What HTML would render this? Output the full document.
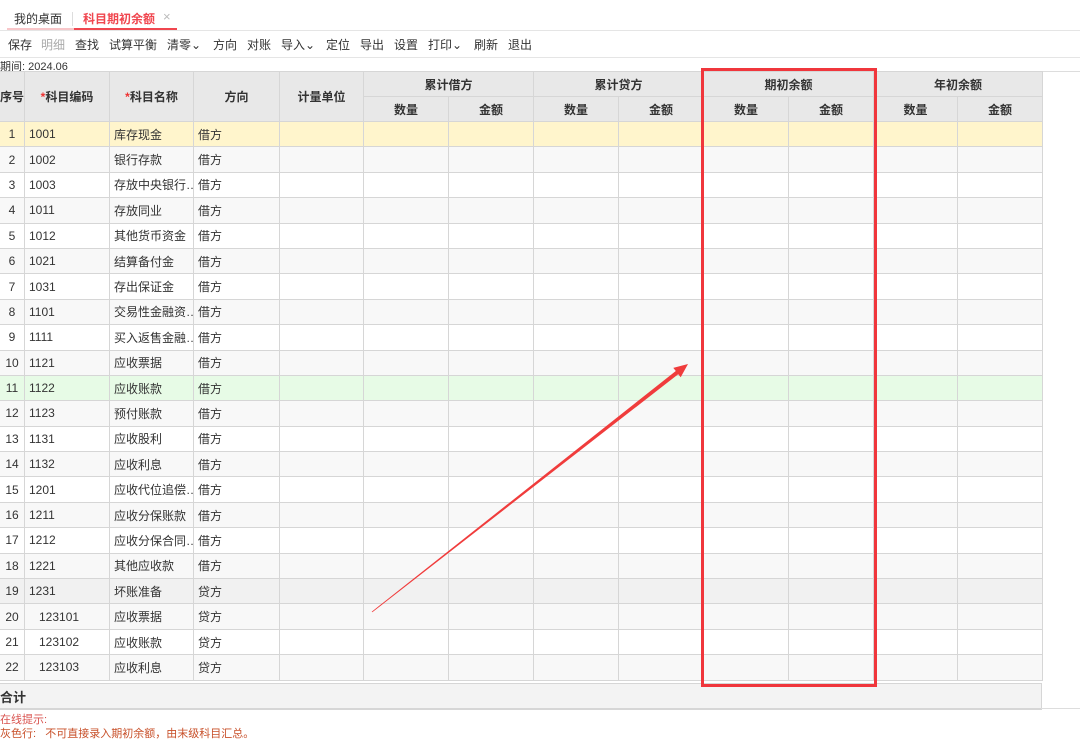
<!DOCTYPE html>
<html><head><meta charset="utf-8"><style>
body{margin:0;width:1080px;height:739px;overflow:hidden;background:#fff;font-family:"Liberation Sans","Noto Sans CJK SC",sans-serif;color:#333;position:relative}
.abs{position:absolute}
.tabs{left:0;top:0;width:1080px;height:30px;border-bottom:1px solid #e5e5e5}
.tab{position:absolute;top:10px;font-size:12px}
.tb{left:0;top:36px;font-size:12px;white-space:nowrap}
table{position:absolute;left:-1px;top:71px;width:1043px;border-collapse:collapse;table-layout:fixed;font-size:12px}
td,th{border:1px solid #d6d6d6;padding:0;overflow:hidden;white-space:nowrap}
th{background:#e8e8e8;font-weight:bold;color:#333;font-size:12px;height:24px}
td{height:24.4px;padding-left:4px;text-overflow:clip}
td.n{text-align:center;padding:0}
tr.e td{background:#f8f8f8}
tr.y td{background:#fff5cc}
tr.g td{background:#e7fbe6}
tr.h td{background:#f1f1f1}
.st{color:#e33}
</style></head><body>
<div class="abs tabs"></div>
<div class="abs tab" style="left:14px;color:#333">我的桌面</div>
<div class="abs" style="left:72px;top:12px;width:1px;height:14px;background:#ddd"></div>
<div class="abs tab" style="left:83px;color:#f0464f;font-weight:bold">科目期初余额</div>
<div class="abs" style="left:163px;top:9px;font-size:13px;color:#bbb">×</div>
<div class="abs" style="left:7px;top:28px;width:67px;height:2px;background:#f8c6c9"></div>
<div class="abs" style="left:74px;top:28px;width:103px;height:2px;background:#f0464f"></div>
<div class="abs tb">
<span class="abs" style="left:8px">保存</span><span class="abs" style="left:41px;color:#aaa">明细</span><span class="abs" style="left:75px">查找</span><span class="abs" style="left:109px">试算平衡</span><span class="abs" style="left:167px">清零⌄</span><span class="abs" style="left:213px">方向</span><span class="abs" style="left:247px">对账</span><span class="abs" style="left:281px">导入⌄</span><span class="abs" style="left:326px">定位</span><span class="abs" style="left:360px">导出</span><span class="abs" style="left:394px">设置</span><span class="abs" style="left:428px">打印⌄</span><span class="abs" style="left:474px">刷新</span><span class="abs" style="left:508px">退出</span>
</div>
<div class="abs" style="left:0;top:57px;width:1080px;height:1px;background:#e5e5e5"></div>
<div class="abs" style="left:0;top:58px;font-size:11px">期间: 2024.06</div>
<div class="abs" style="left:0;top:71px;width:1080px;height:1px;background:#ddd"></div>
<table>
<colgroup><col style="width:25px"><col style="width:85px"><col style="width:84px"><col style="width:86px"><col style="width:84px"><col style="width:85px"><col style="width:85px"><col style="width:85px"><col style="width:85px"><col style="width:85px"><col style="width:85px"><col style="width:84px"><col style="width:85px"></colgroup>
<tr><th rowspan="2">序号</th><th rowspan="2"><span class="st">*</span>科目编码</th><th rowspan="2"><span class="st">*</span>科目名称</th><th rowspan="2">方向</th><th rowspan="2">计量单位</th><th colspan="2">累计借方</th><th colspan="2">累计贷方</th><th colspan="2">期初余额</th><th colspan="2">年初余额</th></tr>
<tr><th>数量</th><th>金额</th><th>数量</th><th>金额</th><th>数量</th><th>金额</th><th>数量</th><th>金额</th></tr>
<tr class="y"><td class="n">1</td><td>1001</td><td>库存现金</td><td>借方</td><td></td><td></td><td></td><td></td><td></td><td></td><td></td><td></td><td></td></tr>
<tr class="e"><td class="n">2</td><td>1002</td><td>银行存款</td><td>借方</td><td></td><td></td><td></td><td></td><td></td><td></td><td></td><td></td><td></td></tr>
<tr><td class="n">3</td><td>1003</td><td>存放中央银行…</td><td>借方</td><td></td><td></td><td></td><td></td><td></td><td></td><td></td><td></td><td></td></tr>
<tr class="e"><td class="n">4</td><td>1011</td><td>存放同业</td><td>借方</td><td></td><td></td><td></td><td></td><td></td><td></td><td></td><td></td><td></td></tr>
<tr><td class="n">5</td><td>1012</td><td>其他货币资金</td><td>借方</td><td></td><td></td><td></td><td></td><td></td><td></td><td></td><td></td><td></td></tr>
<tr class="e"><td class="n">6</td><td>1021</td><td>结算备付金</td><td>借方</td><td></td><td></td><td></td><td></td><td></td><td></td><td></td><td></td><td></td></tr>
<tr><td class="n">7</td><td>1031</td><td>存出保证金</td><td>借方</td><td></td><td></td><td></td><td></td><td></td><td></td><td></td><td></td><td></td></tr>
<tr class="e"><td class="n">8</td><td>1101</td><td>交易性金融资…</td><td>借方</td><td></td><td></td><td></td><td></td><td></td><td></td><td></td><td></td><td></td></tr>
<tr><td class="n">9</td><td>1111</td><td>买入返售金融…</td><td>借方</td><td></td><td></td><td></td><td></td><td></td><td></td><td></td><td></td><td></td></tr>
<tr class="e"><td class="n">10</td><td>1121</td><td>应收票据</td><td>借方</td><td></td><td></td><td></td><td></td><td></td><td></td><td></td><td></td><td></td></tr>
<tr class="g"><td class="n">11</td><td>1122</td><td>应收账款</td><td>借方</td><td></td><td></td><td></td><td></td><td></td><td></td><td></td><td></td><td></td></tr>
<tr class="e"><td class="n">12</td><td>1123</td><td>预付账款</td><td>借方</td><td></td><td></td><td></td><td></td><td></td><td></td><td></td><td></td><td></td></tr>
<tr><td class="n">13</td><td>1131</td><td>应收股利</td><td>借方</td><td></td><td></td><td></td><td></td><td></td><td></td><td></td><td></td><td></td></tr>
<tr class="e"><td class="n">14</td><td>1132</td><td>应收利息</td><td>借方</td><td></td><td></td><td></td><td></td><td></td><td></td><td></td><td></td><td></td></tr>
<tr><td class="n">15</td><td>1201</td><td>应收代位追偿…</td><td>借方</td><td></td><td></td><td></td><td></td><td></td><td></td><td></td><td></td><td></td></tr>
<tr class="e"><td class="n">16</td><td>1211</td><td>应收分保账款</td><td>借方</td><td></td><td></td><td></td><td></td><td></td><td></td><td></td><td></td><td></td></tr>
<tr><td class="n">17</td><td>1212</td><td>应收分保合同…</td><td>借方</td><td></td><td></td><td></td><td></td><td></td><td></td><td></td><td></td><td></td></tr>
<tr class="e"><td class="n">18</td><td>1221</td><td>其他应收款</td><td>借方</td><td></td><td></td><td></td><td></td><td></td><td></td><td></td><td></td><td></td></tr>
<tr class="h"><td class="n">19</td><td>1231</td><td>坏账准备</td><td>贷方</td><td></td><td></td><td></td><td></td><td></td><td></td><td></td><td></td><td></td></tr>
<tr class="e"><td class="n">20</td><td>&nbsp;&nbsp;&nbsp;123101</td><td>应收票据</td><td>贷方</td><td></td><td></td><td></td><td></td><td></td><td></td><td></td><td></td><td></td></tr>
<tr><td class="n">21</td><td>&nbsp;&nbsp;&nbsp;123102</td><td>应收账款</td><td>贷方</td><td></td><td></td><td></td><td></td><td></td><td></td><td></td><td></td><td></td></tr>
<tr class="e"><td class="n">22</td><td>&nbsp;&nbsp;&nbsp;123103</td><td>应收利息</td><td>贷方</td><td></td><td></td><td></td><td></td><td></td><td></td><td></td><td></td><td></td></tr>
</table>
<div class="abs" style="left:0;top:683px;width:1041px;height:24px;background:#f3f3f3;border-top:1px solid #d6d6d6;border-bottom:2px solid #d6d6d6;border-right:1px solid #d6d6d6"></div>
<div class="abs" style="left:0;top:687px;font-size:13px;font-weight:bold">合计</div>
<div class="abs" style="left:1041px;top:708px;width:39px;height:1px;background:#ddd"></div>
<div class="abs" style="left:0;top:711px;font-size:11px;color:#d9534f">在线提示:</div>
<div class="abs" style="left:0;top:725px;font-size:11px;color:#c8502a">灰色行:&nbsp;&nbsp;&nbsp;不可直接录入期初余额，由末级科目汇总。</div>
<div class="abs" style="left:701px;top:68px;width:170px;height:613px;border:3px solid #f0363c"></div>
<svg class="abs" style="left:0;top:0" width="1080" height="739"><polygon points="372.3,612.3 678.2,374.2 680.7,377.3 688,364 673.3,367.9 675.8,371 371.7,611.7" fill="#f03c3c"/></svg>
</body></html>
